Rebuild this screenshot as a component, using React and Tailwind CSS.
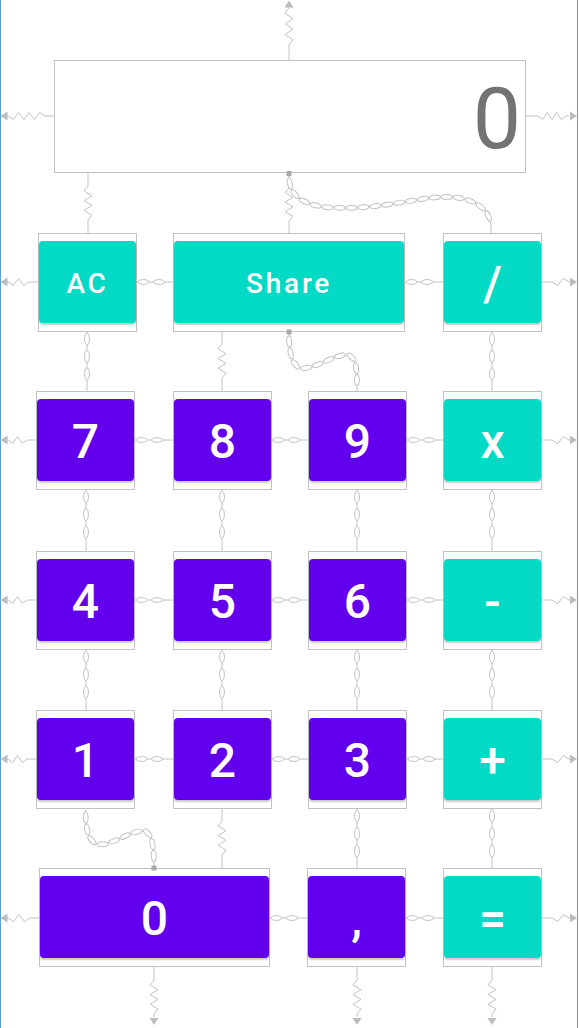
import React from 'react';

const LINE = '#c2c2c2';
const ANCHOR = '#a9a9a9';

// zigzag spring between two points, straight leads at both ends
function spring(ax, ay, bx, by, l1, l2, amp = 4, step = 5) {
  const dx = bx - ax, dy = by - ay;
  const L = Math.hypot(dx, dy);
  const ux = dx / L, uy = dy / L;
  const px = -uy, py = ux;
  const s = l1, e = L - l2;
  const n = Math.max(2, Math.round((e - s) / step));
  const st = (e - s) / n;
  const pts = [[ax, ay], [ax + ux * s, ay + uy * s]];
  for (let i = 1; i < n; i++) {
    const t = s + st * i;
    const side = i % 2 ? amp : -amp;
    pts.push([ax + ux * t + px * side, ay + uy * t + py * side]);
  }
  pts.push([ax + ux * e, ay + uy * e], [bx, by]);
  return 'M' + pts.map(p => p.map(v => v.toFixed(1)).join(',')).join(' L');
}

function arrow(x, y, dir) {
  const s = 4.5, l = 7;
  if (dir === 'up') return `${x},${y} ${x - s},${y + l} ${x + s},${y + l}`;
  if (dir === 'down') return `${x},${y} ${x - s},${y - l} ${x + s},${y - l}`;
  if (dir === 'left') return `${x},${y} ${x + l},${y - s} ${x + l},${y + s}`;
  return `${x},${y} ${x - l},${y - s} ${x - l},${y + s}`;
}

function straightChain(ax, ay, bx, by, period, len = 11, w = 2.4) {
  const dx = bx - ax, dy = by - ay;
  const L = Math.hypot(dx, dy);
  const ux = dx / L, uy = dy / L;
  const rot = (Math.atan2(dy, dx) * 180) / Math.PI;
  const links = [];
  for (let o = 1; o + len <= L + 2; o += period) {
    const c = o + len / 2;
    links.push({ cx: ax + ux * c, cy: ay + uy * c, rx: len / 2, ry: w, rot });
  }
  return { d: `M${ax},${ay} L${bx},${by}`, links };
}

function bez(p0, p1, p2, p3, t) {
  const u = 1 - t;
  return [0, 1].map(k =>
    u * u * u * p0[k] + 3 * u * u * t * p1[k] + 3 * u * t * t * p2[k] + t * t * t * p3[k]
  );
}

function curveChain(start, segs, end, period = 12, len = 11, w = 2.4) {
  const pts = [start];
  let cur = start;
  segs.forEach(([c1, c2, p]) => {
    for (let i = 1; i <= 40; i++) pts.push(bez(cur, c1, c2, p, i / 40));
    cur = p;
  });
  if (end) pts.push(end);
  const cum = [0];
  for (let i = 1; i < pts.length; i++) {
    cum.push(cum[i - 1] + Math.hypot(pts[i][0] - pts[i - 1][0], pts[i][1] - pts[i - 1][1]));
  }
  const total = cum[cum.length - 1];
  const links = [];
  for (let o = 2; o + len <= total; o += period) {
    const c = o + len / 2;
    let i = 1;
    while (i < cum.length - 1 && cum[i] < c) i++;
    const f = (c - cum[i - 1]) / (cum[i] - cum[i - 1] || 1);
    const a = pts[i - 1], b = pts[i];
    links.push({
      cx: a[0] + (b[0] - a[0]) * f,
      cy: a[1] + (b[1] - a[1]) * f,
      rx: len / 2,
      ry: w,
      rot: (Math.atan2(b[1] - a[1], b[0] - a[0]) * 180) / Math.PI,
    });
  }
  let d = `M${start[0]},${start[1]}`;
  segs.forEach(([c1, c2, p]) => {
    d += ` C${c1[0]},${c1[1]} ${c2[0]},${c2[1]} ${p[0]},${p[1]}`;
  });
  if (end) d += ` L${end[0]},${end[1]}`;
  return { d, links };
}

function Blueprint() {
  const springs = [];
  const arrows = [];
  const chains = [];

  // display
  springs.push(spring(289, 7, 289, 60, 1, 15));
  arrows.push(arrow(289, 0.5, 'up'));
  springs.push(spring(7, 116, 54, 116, 1, 9, 3.5));
  arrows.push(arrow(0.5, 116, 'left'));
  springs.push(spring(526, 116, 569, 116, 12, 3, 3.5));
  arrows.push(arrow(577, 116, 'right'));
  springs.push(spring(88, 173, 88, 233, 13, 13));
  springs.push(spring(289, 176, 289, 233, 12, 12));

  // rows
  const rows = [
    { y: 282, left: 38 },
    { y: 440, left: 36 },
    { y: 600, left: 36 },
    { y: 759, left: 36 },
    { y: 918, left: 39 },
  ];
  rows.forEach(r => {
    springs.push(spring(7, r.y, r.left, r.y, 1, 9, 3.5));
    arrows.push(arrow(0.5, r.y, 'left'));
    springs.push(spring(542, r.y, 570, r.y, 10, 1, 3.5));
    arrows.push(arrow(577, r.y, 'right'));
  });

  // horizontal chains
  const hch = [
    [137, 173, 282], [405, 443, 282],
    [135, 173, 440], [272, 308, 440], [407, 443, 440],
    [135, 173, 600], [272, 308, 600], [407, 443, 600],
    [135, 173, 759], [272, 308, 759], [407, 443, 759],
    [270, 307, 918], [406, 443, 918],
  ];
  hch.forEach(([a, b, y]) => chains.push(straightChain(a, y, b, y, 15.5)));

  // vertical chains
  const vch = [
    [87, 332, 391], [492, 332, 391],
    [86, 490, 551], [222, 490, 551], [357, 490, 551], [492, 490, 551],
    [86, 650, 710], [222, 650, 710], [357, 650, 710], [492, 650, 710],
    [357, 809, 868], [492, 809, 868],
  ];
  vch.forEach(([x, a, b]) => chains.push(straightChain(x, a, x, b, 17.5, 12)));

  springs.push(spring(222, 332, 222, 391, 12, 13));
  springs.push(spring(222, 809, 222, 868, 12, 13));

  // curved chains
  chains.push(
    curveChain(
      [289, 176],
      [
        [[289, 200], [310, 208], [343, 208]],
        [[390, 208], [420, 196], [450, 197]],
        [[475, 198], [491, 210], [491, 228]],
      ],
      [491, 233]
    )
  );
  chains.push(
    curveChain(
      [289, 334],
      [
        [[289, 360], [295, 369], [305, 368]],
        [[320, 366], [335, 355], [345, 355]],
        [[355, 355], [357, 365], [357, 385]],
      ],
      [357, 391]
    )
  );
  chains.push(
    curveChain(
      [85.5, 810],
      [
        [[85.5, 838], [92, 846], [105, 844]],
        [[120, 840], [130, 832], [142, 831]],
        [[150, 831], [154, 840], [154, 866]],
      ],
      null
    )
  );

  // bottom springs
  [154, 357, 492].forEach(x => {
    springs.push(spring(x, 967, x, 1017, 13, 3));
    arrows.push(arrow(x, 1025, 'down'));
  });

  return (
    <svg className="absolute inset-0 pointer-events-none" width="579" height="1028" viewBox="0 0 579 1028">
      {springs.map((d, i) => (
        <path key={'s' + i} d={d} fill="none" stroke={LINE} strokeWidth="1" />
      ))}
      {arrows.map((p, i) => (
        <polygon key={'a' + i} points={p} fill="#bdbdbd" />
      ))}
      {chains.map((c, i) => (
        <g key={'c' + i}>
          <path d={c.d} fill="none" stroke={LINE} strokeWidth="1" />
          {c.links.map((l, j) => (
            <ellipse
              key={j}
              cx={l.cx}
              cy={l.cy}
              rx={l.rx}
              ry={l.ry}
              transform={`rotate(${l.rot} ${l.cx} ${l.cy})`}
              fill="white"
              stroke={LINE}
              strokeWidth="1"
            />
          ))}
        </g>
      ))}
      <rect x="286.5" y="171" width="5" height="5" fill={ANCHOR} />
      <rect x="286.5" y="329.5" width="5" height="5" fill={ANCHOR} />
      <rect x="151.5" y="865.5" width="5" height="5" fill={ANCHOR} />
    </svg>
  );
}

function Key({ label, teal, wide, small, className = '' }) {
  return (
    <div className={`h-[99px] border border-[#c2c2c2] ${wide || 'w-[99px]'} ${className}`}>
      <button
        className={`mt-[7px] flex h-[82px] w-full items-center justify-center rounded-[4px] pt-[3px] text-white shadow-[0_2px_2px_rgba(0,0,0,0.22)] ${
          teal ? 'bg-[#03dac5]' : 'bg-[#6200ee]'
        } ${small ? 'text-[28px] font-medium tracking-[0.1em]' : 'text-[48px] font-medium'}`}
      >
        {label}
      </button>
    </div>
  );
}

export default function App() {
  return (
    <div className="relative h-[1028px] w-[579px] overflow-hidden bg-white font-['Roboto',sans-serif]">
      <div className="flow-root h-full w-[578px] border-x border-[#5f9ed9]">
        {/* display */}
        <div className="ml-[53px] mt-[60px] flex h-[113px] w-[472px] items-center justify-end border border-[#c2c2c2] pr-[4px] pt-[4px]">
          <span className="text-[86px] leading-none text-[#737373]">0</span>
        </div>

        {/* AC / Share / divide */}
        <div className="ml-[37px] mt-[60px] flex">
          <Key label="AC" teal small />
          <Key label="Share" teal small wide="w-[232px]" className="ml-[36px]" />
          <Key label="/" teal className="ml-[38px]" />
        </div>

        <div className="ml-[35px] mt-[59px] flex">
          <Key label="7" />
          <Key label="8" className="ml-[38px]" />
          <Key label="9" className="ml-[36px]" />
          <Key label="x" teal className="ml-[36px]" />
        </div>

        <div className="ml-[35px] mt-[61px] flex">
          <Key label="4" />
          <Key label="5" className="ml-[38px]" />
          <Key label="6" className="ml-[36px]" />
          <Key label="-" teal className="ml-[36px]" />
        </div>

        <div className="ml-[35px] mt-[60px] flex">
          <Key label="1" />
          <Key label="2" className="ml-[38px]" />
          <Key label="3" className="ml-[36px]" />
          <Key label="+" teal className="ml-[36px]" />
        </div>

        <div className="ml-[38px] mt-[59px] flex">
          <Key label="0" wide="w-[231px]" />
          <Key label="," className="ml-[37px]" />
          <Key label="=" teal className="ml-[37px]" />
        </div>
      </div>
      <Blueprint />
    </div>
  );
}
